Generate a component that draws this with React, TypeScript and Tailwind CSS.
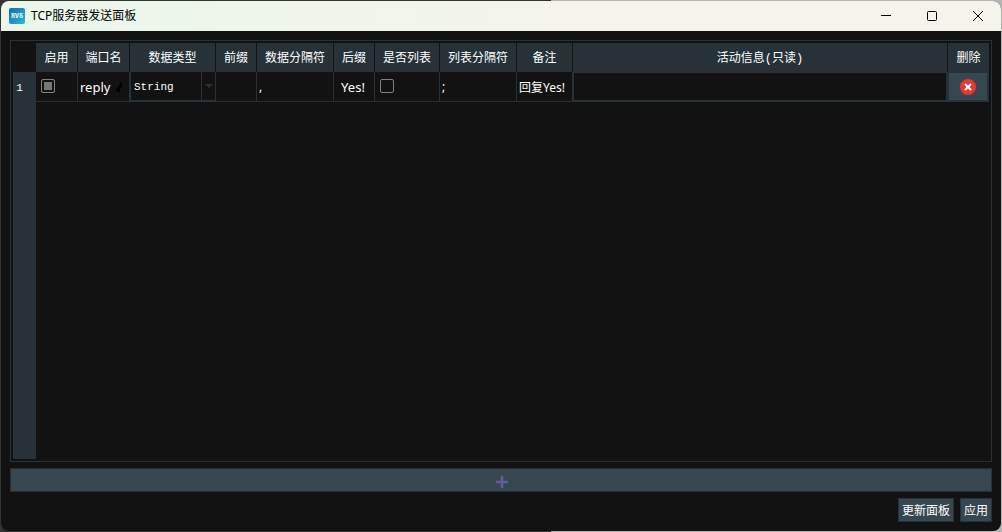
import type { FC, ReactNode } from 'react';

interface Port {
  id: number;
  name: string;
  type: string;
  prefix: string;
  separator: string;
  suffix: string;
  listSeparator: string;
  note: string;
}

const ports: Port[] = [
  { id: 1, name: 'reply', type: 'String', prefix: '', separator: ',', suffix: 'Yes!', listSeparator: ';', note: '回复Yes!' }
];

const columns = [
  { label: '启用', width: 'w-[42px]' },
  { label: '端口名', width: 'w-[52px]' },
  { label: '数据类型', width: 'w-[86px]' },
  { label: '前缀', width: 'w-[41px]' },
  { label: '数据分隔符', width: 'w-[77px]' },
  { label: '后缀', width: 'w-[41px]' },
  { label: '是否列表', width: 'w-[65px]' },
  { label: '列表分隔符', width: 'w-[77px]' },
  { label: '备注', width: 'w-[56px]' },
  { label: '活动信息(只读)', width: 'w-auto' },
  { label: '删除', width: 'w-[41px]' }
];

const AppLogo = () => (
  <svg viewBox="0 0 16 16" className="h-4 w-4" aria-hidden="true">
    <defs>
      <linearGradient id="logo" x1="0" y1="0" x2="1" y2="1">
        <stop offset="0" stopColor="#1767a8" />
        <stop offset="1" stopColor="#27c0d0" />
      </linearGradient>
    </defs>
    <rect width="16" height="16" rx="2" fill="url(#logo)" />
    <text x="8" y="10" textAnchor="middle" fontSize="5.5" fontWeight="900" fill="#d8f0f8" fontFamily="Inter, sans-serif">
      RVS
    </text>
  </svg>
);

const TitleBar: FC = () => (
  <header className="flex h-[30px] shrink-0 items-center bg-linear-to-r from-[#eaf7ea] to-[#f5f4eb] to-60% pl-2 text-black">
    <AppLogo />
    <h1 className="ml-1.5 grow text-[12px]">TCP服务器发送面板</h1>
    <button type="button" aria-label="最小化" className="flex h-full w-[46px] items-center justify-center">
      <svg viewBox="0 0 10 10" className="h-2.5 w-2.5" stroke="currentColor">
        <path d="M0 4.5h10" />
      </svg>
    </button>
    <button type="button" aria-label="最大化" className="flex h-full w-[46px] items-center justify-center">
      <svg viewBox="0 0 10 10" className="h-2.5 w-2.5" fill="none" stroke="currentColor">
        <rect x="0.5" y="0.5" width="9" height="9" rx="1" />
      </svg>
    </button>
    <button type="button" aria-label="关闭" className="flex h-full w-[46px] items-center justify-center">
      <svg viewBox="0 0 10 10" className="h-2.5 w-2.5" stroke="currentColor">
        <path d="M0 0l10 10M10 0L0 10" />
      </svg>
    </button>
  </header>
);

const Cell: FC<{ children?: ReactNode }> = ({ children }) => (
  <td className="border-r border-b border-[#263238] p-0">{children}</td>
);

interface TextFieldProps {
  label: string;
  value: string;
  className?: string;
}

const TextField: FC<TextFieldProps> = ({ label, value, className = 'px-0.5 text-[12px]' }) => (
  <input
    type="text"
    aria-label={label}
    defaultValue={value}
    className={`block h-[29px] w-full bg-transparent outline-none ${className}`}
  />
);

const PortRow: FC<{ port: Port }> = ({ port }) => (
  <tr className="h-[30px]">
    <th scope="row" className="bg-[#263238] pt-0.5 pr-2.5 pb-0 pl-0 text-center font-['Liberation_Mono','Noto_Sans_CJK_SC',monospace] text-[11px] font-normal">
      {port.id}
    </th>
    <Cell>
      <input
        type="checkbox"
        aria-label="启用"
        defaultChecked
        className="mb-0.5 ml-[5px] block h-3.5 w-3.5 appearance-none rounded-xs border border-[#808080] bg-[#121212] checked:bg-[#777] checked:inset-ring-2 checked:inset-ring-[#121212]"
      />
    </Cell>
    <Cell>
      <div className="flex items-center">
        <TextField label="端口名" value={port.name} className="pl-0.5 text-[13px]" />
        <svg viewBox="0 0 8 12" className="mr-1.5 h-3 w-2 shrink-0" fill="#000" aria-hidden="true">
          <path d="M5 1l2 1v4l-2 2v3H3V9L1 11V8l3-3z" />
        </svg>
      </div>
    </Cell>
    <Cell>
      <div className="flex h-[29px] items-stretch border-b border-l border-[#263238]">
        <select
          aria-label="数据类型"
          defaultValue={port.type}
          className="min-w-0 grow appearance-none bg-transparent pt-[3px] pl-[3px] font-['Liberation_Mono','Noto_Sans_CJK_SC',monospace] text-[11px] outline-none"
        >
          <option>String</option>
        </select>
        <span className="flex w-[14px] items-center justify-center border-l border-[#263238]">
          <svg viewBox="0 0 8 4" className="h-1 w-2" fill="#263238" aria-hidden="true">
            <path d="M0 0h8L4 4z" />
          </svg>
        </span>
      </div>
    </Cell>
    <Cell>
      <TextField label="前缀" value={port.prefix} />
    </Cell>
    <Cell>
      <TextField label="数据分隔符" value={port.separator} />
    </Cell>
    <Cell>
      <TextField label="后缀" value={port.suffix} className="pr-0.5 text-center text-[13px]" />
    </Cell>
    <Cell>
      <input
        type="checkbox"
        aria-label="是否列表"
        className="mb-0.5 ml-[5px] block h-3.5 w-3.5 appearance-none rounded-xs border border-[#808080] bg-[#121212] checked:bg-[#777]"
      />
    </Cell>
    <Cell>
      <TextField label="列表分隔符" value={port.listSeparator} />
    </Cell>
    <Cell>
      <TextField label="备注" value={port.note} />
    </Cell>
    <Cell>
      <input
        type="text"
        readOnly
        aria-label="活动信息"
        className="block h-[29px] w-full border border-[#263238] bg-transparent outline-none"
      />
    </Cell>
    <Cell>
      <button type="button" aria-label="删除" className="flex h-[29px] w-full items-center justify-center border border-[#263238] bg-[#37474f]">
        <svg viewBox="0 0 16 16" className="h-4 w-4">
          <circle cx="8" cy="8" r="8" fill="#e53a32" />
          <path d="M5 5l6 6M11 5l-6 6" stroke="#fff" strokeWidth="2" />
        </svg>
      </button>
    </Cell>
  </tr>
);

const PortTable: FC = () => (
  <div className="flex grow flex-col border border-[#263238] p-0.5">
    <table className="w-full table-fixed border-separate border-spacing-0 text-[12px]">
      <colgroup>
        <col className="w-[23px]" />
        {columns.map((column) => (
          <col key={column.label} className={column.width} />
        ))}
      </colgroup>
      <thead>
        <tr className="h-[29px]">
          <td className="p-0" />
          {columns.map((column) => (
            <th
              key={column.label}
              scope="col"
              className="border-r border-[#121212] bg-[#263238] px-0 pt-0.5 pb-0 font-['Liberation_Mono','Noto_Sans_CJK_SC',monospace] font-normal whitespace-nowrap last:border-r-0"
            >
              {column.label}
            </th>
          ))}
        </tr>
      </thead>
      <tbody>
        {ports.map((port) => (
          <PortRow key={port.id} port={port} />
        ))}
      </tbody>
    </table>
    <div className="w-[23px] grow bg-[#263238]" />
  </div>
);

const App: FC = () => (
  <div className="flex h-screen flex-col bg-linear-to-r from-[#333] from-55% to-[#b4b4b4] to-55% p-px font-['Noto_Sans','Noto_Sans_CJK_SC',sans-serif] text-white">
    <div className="flex grow flex-col overflow-hidden rounded-lg bg-[#121212]">
      <TitleBar />
      <main className="flex grow flex-col px-[9px] pt-[9px] pb-[9px]">
        <PortTable />
        <button type="button" aria-label="添加" className="mt-1.5 flex h-6 items-center justify-center border border-[#263238] bg-[#37474f]">
          <svg viewBox="0 0 12 12" className="mt-1 ml-0.5 h-3 w-3" stroke="#685b9c" strokeWidth="2.5" strokeLinecap="round">
            <path d="M6 1v10M1 6h10" />
          </svg>
        </button>
        <div className="mt-1.5 flex justify-end gap-1.5 text-[12px]">
          <button type="button" className="h-6 border border-[#263238] bg-[#37474f] px-[3px] pt-0.5">更新面板</button>
          <button type="button" className="h-6 border border-[#263238] bg-[#37474f] px-[3px] pt-0.5">应用</button>
        </div>
      </main>
    </div>
  </div>
);

export default App;
